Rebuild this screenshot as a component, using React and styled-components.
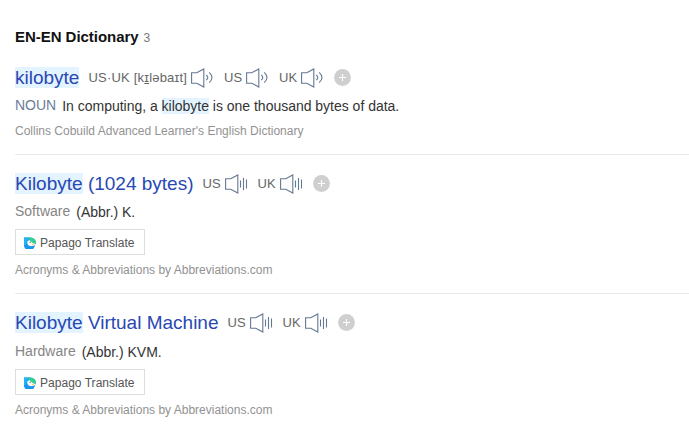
import React from "react";
import styled, { createGlobalStyle } from "styled-components";

const GlobalStyle = createGlobalStyle`
  * { box-sizing: border-box; }
  body { margin: 0; background: #fff; font-family: "Liberation Sans", Arial, sans-serif; overflow: hidden; }
`;

const Page = styled.main`
  width: 689px;
  height: 447px;
  padding: 27px 0 0 15px;
  overflow: hidden;
`;

const Heading = styled.h1`
  display: flex;
  align-items: center;
  gap: 5px;
  height: 20px;
  margin: 0 0 14px;
  font-size: 15px;
  line-height: 20px;
  letter-spacing: -0.04px;
  color: #111;
`;

const Count = styled.span`
  font-size: 12px;
  font-weight: 400;
  color: #777;
  padding-top: 1px;
`;

const Entry = styled.article`
  height: ${(p) => p.$height}px;
  padding-top: ${(p) => p.$top}px;
  border-bottom: ${(p) => (p.$last ? "0" : "1px solid #ebebeb")};
`;

const TitleRow = styled.div`
  display: flex;
  align-items: center;
  height: 32px;
  white-space: nowrap;
`;

const Title = styled.h2`
  margin: 0 9px 0 0;
  font-size: 19px;
  line-height: 22px;
  font-weight: 400;
  color: #2848b4;
`;

const Mark = styled.mark`
  background: #e3f3ff;
  color: inherit;
`;

const Accent = styled.span`
  font-size: 13px;
  line-height: 16px;
  color: #666;
  margin-right: 4px;
  letter-spacing: ${(p) => p.$spacing || 0}px;
`;

const Speaker = styled.svg`
  display: block;
  flex: none;
  width: 23px;
  height: 20px;
  margin: 0 10px 1px 0;
  fill: none;
  stroke: #667891;
  stroke-width: 1.1;
`;

const AddButton = styled.button`
  display: block;
  width: 17px;
  height: 17px;
  margin-bottom: 2px;
  padding: 0;
  border: 0;
  background: none;

  svg { display: block; }
`;

const Definition = styled.p`
  display: flex;
  align-items: center;
  gap: 6px;
  margin: ${(p) => p.$shift || 0}px 0 0;
  height: 26px;
  font-size: 14px;
  line-height: 17px;
  color: #333;
  white-space: nowrap;
`;

const Label = styled.span`
  margin-bottom: 2px;
  color: ${(p) => (p.$noun ? "#6b7b99" : "#858585")};
`;

const Meaning = styled.span`
  letter-spacing: -0.015px;
`;

const Translate = styled.button`
  display: flex;
  align-items: center;
  gap: 3px;
  width: 130px;
  height: 26px;
  margin: 4px 0 0;
  padding: 2px 0 0 8px;
  border: 1px solid #dedede;
  background: #fff;
  font: 12px/16px "Liberation Sans", Arial, sans-serif;
  letter-spacing: 0.03px;
  color: #555;
  white-space: nowrap;
`;

const Source = styled.p`
  margin: ${(p) => p.$top}px 0 0;
  font-size: 12px;
  line-height: 16px;
  color: #929292;
`;

function Sound({ bars }) {
  return (
    <Speaker viewBox="0 0 23 20" aria-hidden="true">
      <path d="M.6 4.7H5.8L12.8 .9V19L5.8 15.2H.6Z" />
      {bars ? (
        <path d="M15.5 6.5v7M18.5 4v12M21.5 5.5v9" />
      ) : (
        <path d="M15.3 6.8q3 2.7 0 5.4M18.2 4.3q5.6 5.2 0 10.4" />
      )}
    </Speaker>
  );
}

function Add() {
  return (
    <AddButton aria-label="Add">
      <svg width="17" height="17" viewBox="0 0 17 17">
        <circle cx="8.5" cy="8.5" r="8.4" fill="#cfcfcf" />
        <path d="M8.5 5v7M5 8.5h7" stroke="#fff" strokeWidth="1.1" />
      </svg>
    </AddButton>
  );
}

function Papago() {
  return (
    <svg width="13" height="12" viewBox="0 0 13 12" aria-hidden="true">
      <path d="M0 .5H6.5A5.5 5.5 0 0 1 12 6L10.5 9.7A5.5 5.5 0 0 1 0 9.2Z" fill="#1b96ee" />
      <path d="M4.5 .5h2A5.5 5.5 0 0 1 12 6.6H9L5 3Z" fill="#35d08b" />
      <path d="M0 .5h5.5L3 4 1.5 8H0Z" fill="#22b5f2" />
      <path d="M3.2 4.8 5.2 3 9 6.3l3 .8-1.7 1.5-2 .5C5 9.8 3 7.7 3.2 4.8Z" fill="#fff" />
      <circle cx="6.2" cy="5.2" r=".7" fill="#53728a" />
      <path d="M7.5 6.6 10.6 7.3 8 8.5Z" fill="#f7d568" />
    </svg>
  );
}

function Sounds({ bars }) {
  return (
    <>
      <Accent>US</Accent>
      <Sound bars={bars} />
      <Accent>UK</Accent>
      <Sound bars={bars} />
      <Add />
    </>
  );
}

function Abbreviation({ rest, kind, meaning, shift, last }) {
  return (
    <Entry $height={last ? 150 : 139} $top={13} $last={last}>
      <TitleRow>
        <Title><Mark>Kilobyte</Mark> {rest}</Title>
        <Sounds bars />
      </TitleRow>
      <Definition $shift={shift}>
        <Label>{kind}</Label>
        <Meaning>{meaning}</Meaning>
      </Definition>
      <Translate><Papago />Papago Translate</Translate>
      <Source $top={7}>Acronyms &amp; Abbreviations by Abbreviations.com</Source>
    </Entry>
  );
}

export default function App() {
  return (
    <>
      <GlobalStyle />
      <Page>
        <Heading>EN-EN Dictionary <Count>3</Count></Heading>
        <Entry $height={94} $top={1}>
          <TitleRow>
            <Title>
              <Mark>kilobyte</Mark>
            </Title>
            <Accent $spacing={0.21}>US·UK [k<u>ɪ</u>ləbaɪt]</Accent>
            <Sound />
            <Sounds />
          </TitleRow>
          <Definition $shift={-1}>
            <Label $noun>NOUN</Label>
            <Meaning>In computing, a <Mark>kilobyte</Mark> is one thousand bytes of data.</Meaning>
          </Definition>
          <Source $top={4}>Collins Cobuild Advanced Learner's English Dictionary</Source>
        </Entry>
        <Abbreviation rest="(1024 bytes)" kind="Software" meaning="(Abbr.) K." shift={-1} />
        <Abbreviation rest="Virtual Machine" kind="Hardware" meaning="(Abbr.) KVM." last />
      </Page>
    </>
  );
}
